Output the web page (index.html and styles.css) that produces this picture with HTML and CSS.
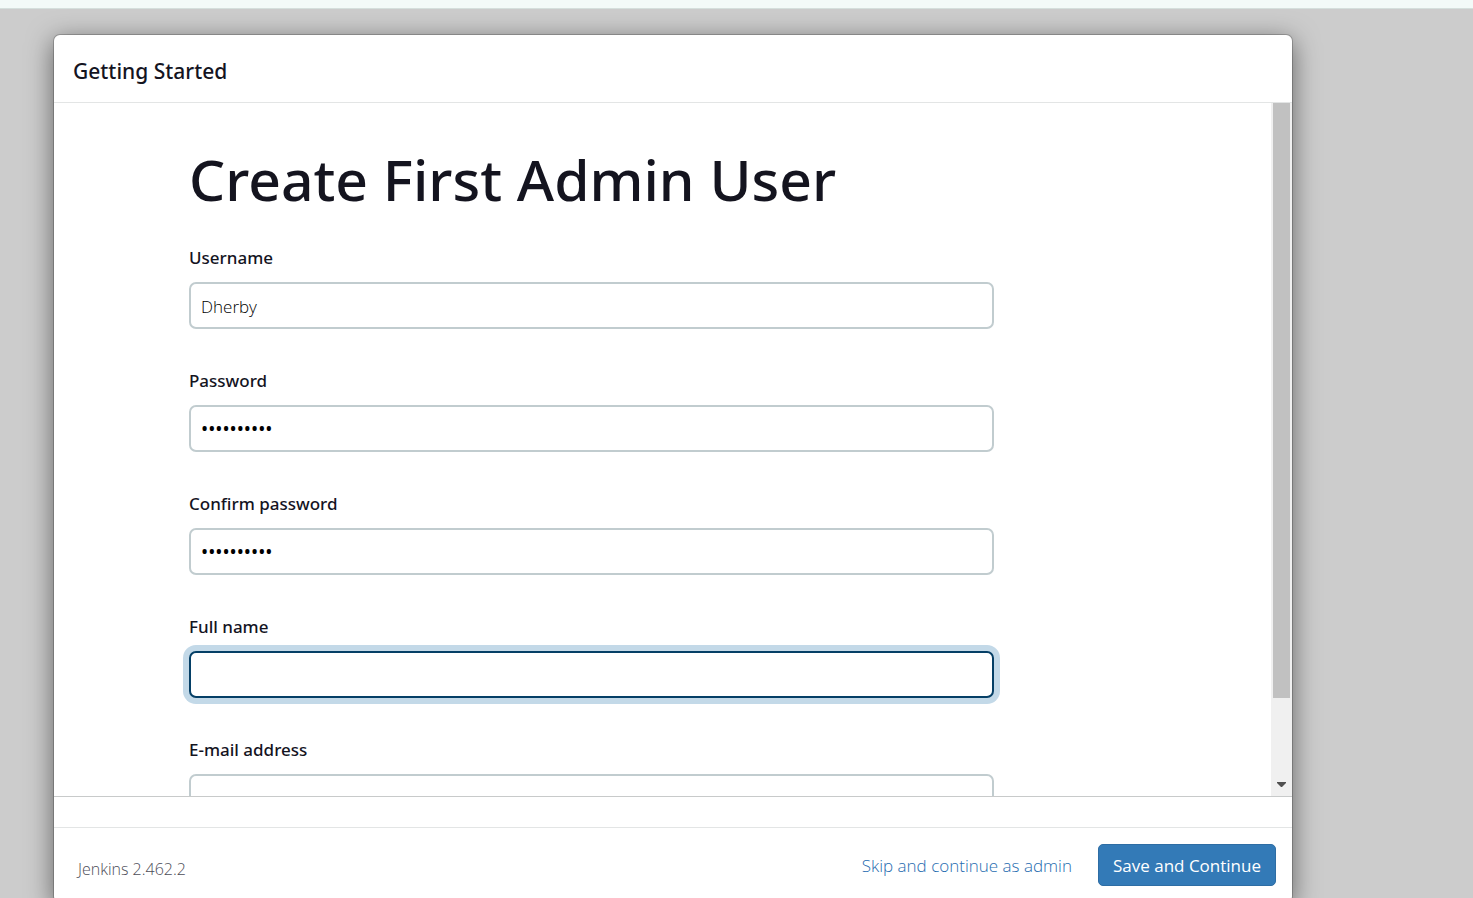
FILE: index.html
```html
<!DOCTYPE html>
<html lang="en">
<head>
<meta charset="utf-8">
<meta name="viewport" content="width=device-width, initial-scale=1">
<title>Getting Started</title>
<link rel="stylesheet" href="styles.css">
</head>
<body>
<div class="top-strip"></div>
<main class="backdrop">
  <form class="modal">
    <header class="modal-header"><h4 class="modal-title">Getting Started</h4></header>
    <div class="modal-body">
      <div class="content">
        <h1 class="heading">Create First Admin User</h1>
        <div class="field">
          <label class="label" for="username">Username</label>
          <input class="input" id="username" type="text" value="Dherby">
        </div>
        <div class="field">
          <label class="label" for="password">Password</label>
          <input class="input input-secret" id="password" type="password" value="abcdefghij">
        </div>
        <div class="field">
          <label class="label" for="confirm">Confirm password</label>
          <input class="input input-secret" id="confirm" type="password" value="abcdefghij">
        </div>
        <div class="field">
          <label class="label" for="fullname">Full name</label>
          <input class="input input-active" id="fullname" type="text">
        </div>
        <div class="field">
          <label class="label" for="email">E-mail address</label>
          <input class="input" id="email" type="text">
        </div>
      </div>
      <div class="scrollbar" aria-hidden="true">
        <div class="thumb"></div>
        <svg class="arrow" width="9" height="5" viewBox="0 0 9 5"><path d="M0 0h9v1L5 5H4L0 1z" fill="#505050"/></svg>
      </div>
    </div>
    <div class="spacer"></div>
    <footer class="modal-footer">
      <span class="version">Jenkins 2.462.2</span>
      <button class="btn btn-link" type="button">Skip and continue as admin</button>
      <button class="btn btn-primary" type="button">Save and Continue</button>
    </footer>
  </form>
</main>
</body>
</html>
```
FILE: styles.css
```css
* { box-sizing: border-box; }

body {
  margin: 0;
  height: 100vh;
  overflow: hidden;
  background: #ccc;
  color: #14141f;
  font-family: "Noto Sans", "Open Sans", sans-serif;
  font-size: 17px;
}

.top-strip {
  height: 9px;
  background: #f3faf8;
  border-bottom: 1px solid #d5dfdc;
}

.backdrop { padding: 25px 180px 0 53px; }

.modal {
  background: #fff;
  background-clip: padding-box;
  border: 1px solid rgba(0, 0, 0, 0.2);
  border-radius: 7px;
  box-shadow: 0 6px 26px rgba(0, 0, 0, 0.5);
}

.modal-header {
  padding: 23px 19px 18px;
  border-bottom: 1px solid #e3e5e5;
}

.modal-title {
  margin: 0;
  font-size: 21px;
  font-weight: 500;
  line-height: 26px;
}

.modal-body {
  display: flex;
  height: calc(100vh - 204px);
  overflow: hidden;
  border-bottom: 1px solid #c8caca;
}

.content {
  flex: 1;
  padding: 36px 277px 0 135px;
}

.heading {
  margin: 0 0 26px;
  font-size: 57px;
  font-weight: 500;
  line-height: 80px;
  white-space: nowrap;
}

.field { margin-bottom: 39px; }

.label {
  display: block;
  margin-bottom: 12px;
  font-size: 17px;
  font-weight: 500;
  line-height: 25px;
}

.input {
  display: block;
  width: 100%;
  height: 47px;
  padding: 1px 10px 0;
  border: 2px solid #c1cccf;
  border-radius: 7px;
  outline: none;
  background: #fff;
  color: #000;
  font: 300 17px "Open Sans", "Noto Sans", sans-serif;
}

.input-secret {
  font-family: "Noto Sans", sans-serif;
  font-size: 19px;
  font-weight: 400;
}

.input-active {
  border-color: #053f66;
  box-shadow: 0 0 0 6px #c3d9e8;
}

.scrollbar {
  display: flex;
  flex-direction: column;
  justify-content: space-between;
  align-items: center;
  width: 21px;
  padding-bottom: 9px;
  background: #f0f0f0;
}

.thumb {
  width: 17px;
  height: 87%;
  flex-shrink: 0;
  background: #c1c1c1;
}

.arrow { display: block; }

.spacer { height: 30px; }

.modal-footer {
  display: flex;
  align-items: center;
  padding: 16px;
  border-top: 1px solid #e3e5e5;
}

.version {
  flex: 1;
  padding: 8px 8px 0;
  color: #4d4d57;
  font-family: "Open Sans", "Noto Sans", sans-serif;
  font-size: 16px;
  font-weight: 300;
}

.btn {
  padding: 2px 15px 0;
  border: 1px solid transparent;
  border-radius: 5px;
  font: 400 17px/38px "Open Sans", "Noto Sans", sans-serif;
}

.btn-link {
  margin-right: 10px;
  background: none;
  color: #1f6cb0;
  font-weight: 300;
}

.btn-primary {
  padding: 2px 14px 0;
  border-color: #2e6da4;
  background: #337ab7;
  color: #fff;
}
```
